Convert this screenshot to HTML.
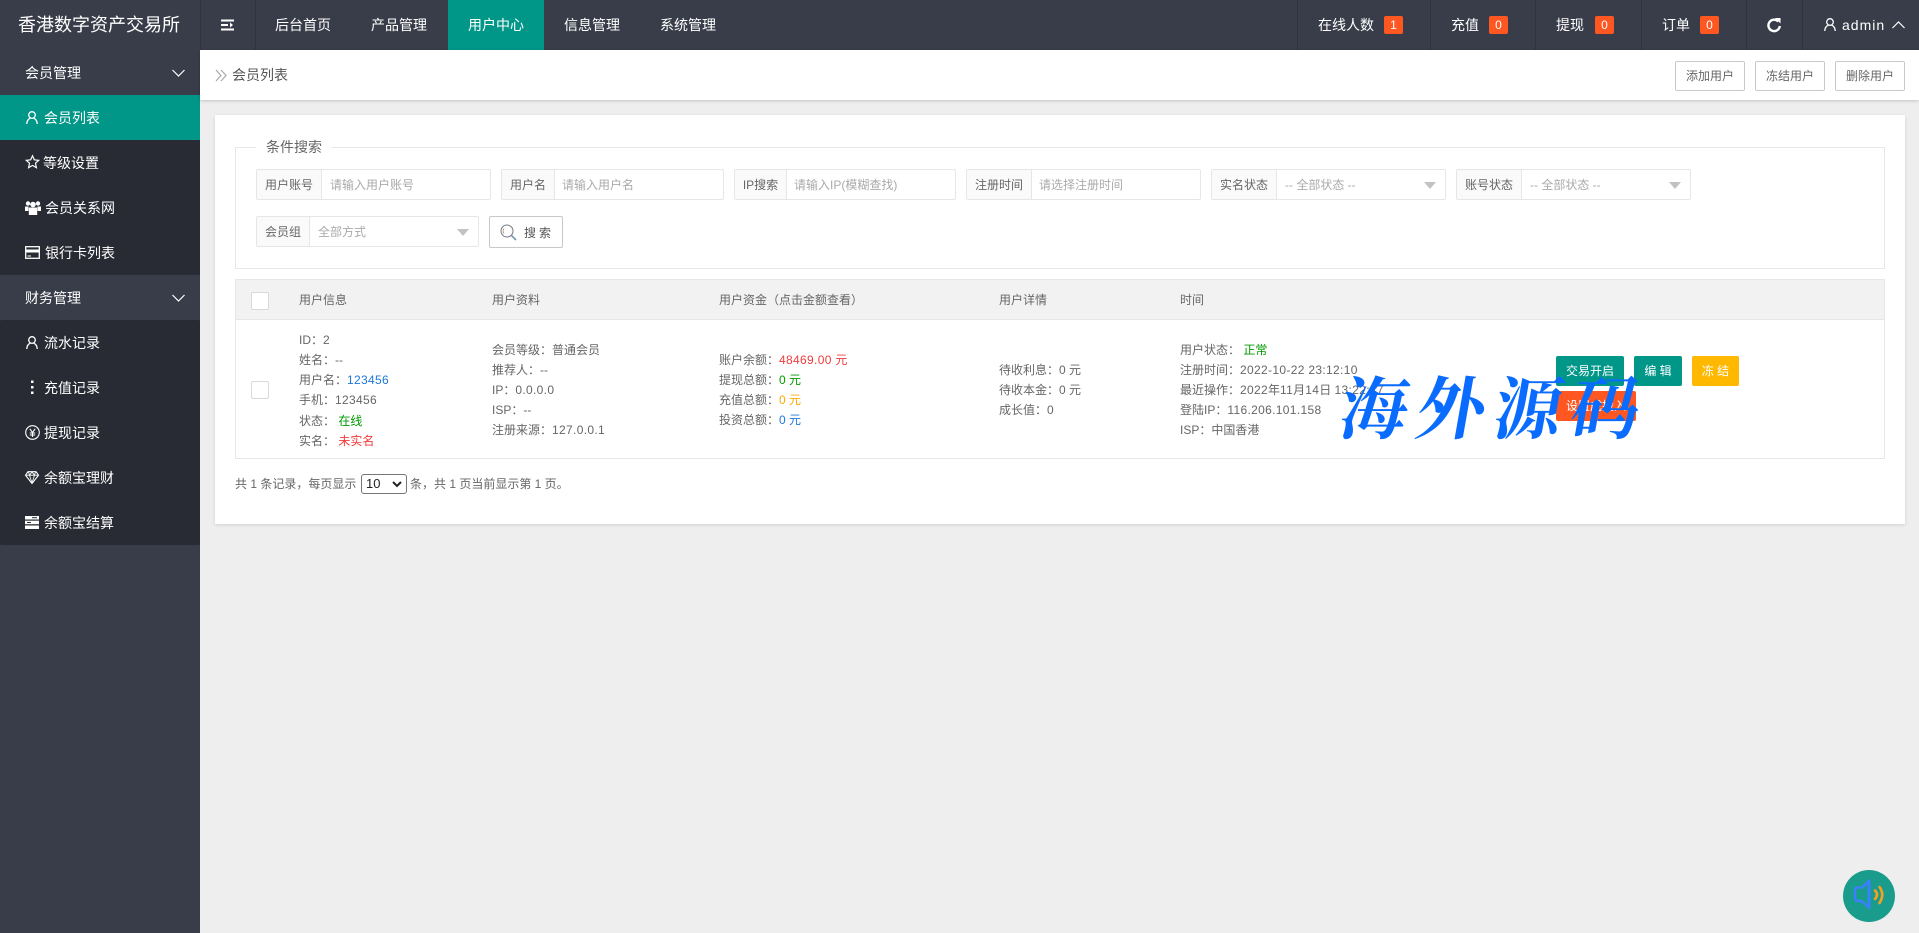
<!DOCTYPE html>
<html lang="zh"><head><meta charset="utf-8"><title>会员列表</title>
<style>
*{box-sizing:border-box;margin:0;padding:0}
html,body{width:1919px;height:933px;overflow:hidden;background:#eee}
body{position:relative;font-family:"Liberation Sans","Noto Sans CJK SC",sans-serif;font-size:12px;color:#666}
.a{position:absolute;white-space:nowrap}
.t{position:absolute;white-space:nowrap;line-height:20px;height:20px}
.rw{position:absolute;left:0;top:1px;width:0;height:0}
.n{letter-spacing:.33px}
svg{position:absolute;overflow:visible}
.top{position:absolute;left:0;top:0;width:1919px;height:50px;background:#393d49}
.nav{position:absolute;top:0;height:50px;line-height:50px;color:#fff;font-size:14px;text-align:center;width:96px}
.dv{position:absolute;top:0;width:1px;height:50px;background:#2f333d}
.bd{position:absolute;top:16px;width:19px;height:18px;background:#ff5722;color:#fff;font-size:12px;line-height:18px;text-align:center;border-radius:2px}
.side{position:absolute;left:0;top:50px;width:200px;height:883px;background:#393d49}
.sub{position:absolute;left:0;width:200px;background:#282b33;border-radius:2px}
.si{position:absolute;left:0;width:200px;height:45px;line-height:47px;color:#fff;font-size:14px}
.si span{position:absolute;white-space:nowrap}
.f{position:absolute;height:31px;background:#fff;border:1px solid #e6e6e6;border-radius:2px}
.f b{position:absolute;left:0;top:0;height:29px;line-height:30px;background:#fafafa;border-right:1px solid #e6e6e6;font-weight:400;color:#666;text-align:center;font-size:12px}
.f i{position:absolute;top:0;height:29px;line-height:30px;font-style:normal;color:#aaa;font-size:12px;white-space:nowrap}
.f u{position:absolute;top:12px;width:0;height:0;border:6px solid transparent;border-top:7px solid #c2c2c2;border-bottom:0}
.hb{position:absolute;top:61px;height:30px;width:70px;border:1px solid #c9c9c9;border-radius:2px;background:#fff;color:#666;text-align:center;line-height:28px;font-size:12px}
.cb{position:absolute;width:18px;height:18px;background:#fff;border:1px solid #d9d9d9;border-radius:2px}
.btn{position:absolute;height:30px;line-height:30px;color:#fff;text-align:center;border-radius:2px;font-size:12px}
.g{color:#090}.r{color:#f23b3b}.b{color:#1e78d8}.o{color:#ffa800}
</style></head><body>

<div class="top"></div>
<div class="a" style="left:18px;top:0;line-height:50px;font-size:18px;color:#fff">香港数字资产交易所</div>
<div class="dv" style="left:200px"></div><div class="dv" style="left:255px"></div>
<svg style="left:221px;top:19px" width="14" height="12" fill="none" stroke="#fff" stroke-width="2"><path d="M0 1.500H13M0 6H7M0 10.500H13"/><path d="M9 3.500L12 6L9 8.500Z" fill="#fff" stroke="none"/></svg>
<div class="nav" style="left:255px">后台首页</div>
<div class="nav" style="left:351px">产品管理</div>
<div class="nav" style="left:448px;background:#009688">用户中心</div>
<div class="nav" style="left:544px">信息管理</div>
<div class="nav" style="left:640px">系统管理</div>

<div class="dv" style="left:1297px"></div><div class="dv" style="left:1430px"></div><div class="dv" style="left:1535px"></div><div class="dv" style="left:1641px"></div><div class="dv" style="left:1746px"></div><div class="dv" style="left:1802px"></div>
<div class="nav" style="left:1318px;width:56px">在线人数</div><div class="bd" style="left:1384px">1</div>
<div class="nav" style="left:1451px;width:28px">充值</div><div class="bd" style="left:1489px">0</div>
<div class="nav" style="left:1556px;width:28px">提现</div><div class="bd" style="left:1595px">0</div>
<div class="nav" style="left:1662px;width:28px">订单</div><div class="bd" style="left:1700px">0</div>
<svg style="left:1767px;top:18px" width="14" height="14" fill="none" stroke="#fff" stroke-width="2.400"><path d="M11.300 3.500A5.700 5.700 0 1 0 12.800 8"/><path d="M8 0H13.500V5.500Z" fill="#fff" stroke="none"/></svg>
<svg style="left:1824px;top:18px" width="12" height="14" fill="none" stroke="#fff" stroke-width="1.300"><circle cx="6" cy="4" r="3.300"/><path d="M0.700 13C1 9.500 2.500 7.800 4.300 7.200M11.300 13C11 9.500 9.500 7.800 7.700 7.200"/></svg>
<div class="a" style="left:1842px;top:0;line-height:50px;font-size:14px;color:#fff;letter-spacing:1px">admin</div>
<svg style="left:1892px;top:21px" width="13" height="8" fill="none" stroke="#fff" stroke-width="1.200"><path d="M0.500 7L6.500 1L12.500 7"/></svg>

<div class="side"></div>
<div class="sub" style="top:95px;height:180px"></div>
<div class="sub" style="top:320px;height:225px"></div>
<div class="si" style="top:50px"><span style="left:25px">会员管理</span></div>
<svg style="left:172px;top:69px" width="13" height="8" fill="none" stroke="#fff" stroke-width="1.200"><path d="M0.500 1L6.500 7L12.500 1"/></svg>
<div class="si" style="top:95px;background:#009688"><span style="left:44px">会员列表</span></div>
<div class="si" style="top:140px"><span style="left:43px">等级设置</span></div>
<div class="si" style="top:185px"><span style="left:45px">会员关系网</span></div>
<div class="si" style="top:230px"><span style="left:45px">银行卡列表</span></div>
<div class="si" style="top:275px"><span style="left:25px">财务管理</span></div>
<svg style="left:172px;top:294px" width="13" height="8" fill="none" stroke="#fff" stroke-width="1.200"><path d="M0.500 1L6.500 7L12.500 1"/></svg>
<div class="si" style="top:320px"><span style="left:44px">流水记录</span></div>
<div class="si" style="top:365px"><span style="left:44px">充值记录</span></div>
<div class="si" style="top:410px"><span style="left:44px">提现记录</span></div>
<div class="si" style="top:455px"><span style="left:44px">余额宝理财</span></div>
<div class="si" style="top:500px"><span style="left:44px">余额宝结算</span></div>

<svg style="left:26px;top:111px" width="12" height="14" fill="none" stroke="#fff" stroke-width="1.300"><circle cx="6" cy="4" r="3.300"/><path d="M0.700 13C1 9.500 2.500 7.800 4.300 7.200M11.300 13C11 9.500 9.500 7.800 7.700 7.200"/></svg>
<svg style="left:26px;top:155px" width="14" height="14" fill="none" stroke="#fff" stroke-width="1.200"><path d="M6.500 0.800L8.300 4.800L12.700 5.300L9.500 8.200L10.400 12.700L6.500 10.400L2.600 12.700L3.500 8.200L0.300 5.300L4.700 4.800Z"/></svg>
<svg style="left:25px;top:201px" width="16" height="14" fill="#fff"><circle cx="3" cy="2.500" r="2.200"/><circle cx="13" cy="2.500" r="2.200"/><path d="M0 5.500H3.500V10H0ZM12.500 5.500H16V10H12.500Z"/><circle cx="8" cy="3.500" r="2.800"/><path d="M3.800 6.500H12.200V14H3.800Z"/></svg>
<svg style="left:25px;top:246px" width="15" height="13" fill="none" stroke="#fff" stroke-width="1.300"><rect x="0.700" y="0.700" width="13.600" height="11.600"/><path d="M0.700 5H14.300" stroke-width="3"/><path d="M2.500 10H6" stroke-width="1"/></svg>
<svg style="left:26px;top:336px" width="12" height="14" fill="none" stroke="#fff" stroke-width="1.300"><circle cx="6" cy="4" r="3.300"/><path d="M0.700 13C1 9.500 2.500 7.800 4.300 7.200M11.300 13C11 9.500 9.500 7.800 7.700 7.200"/></svg>
<svg style="left:31px;top:380px" width="3" height="15" fill="#fff"><rect width="2.500" height="2.500" x="0" y="0.500"/><rect width="2.500" height="2.500" x="0" y="6"/><rect width="2.500" height="2.500" x="0" y="11.500"/></svg>
<svg style="left:25px;top:425px" width="15" height="15" fill="none" stroke="#fff" stroke-width="1.100"><circle cx="7.500" cy="7.500" r="6.800"/><path d="M4.800 3.800L7.500 7.500L10.200 3.800M7.500 7.500V12M4.800 8H10.200M4.800 10H10.200"/></svg>
<svg style="left:25px;top:471px" width="14" height="13" fill="none" stroke="#fff" stroke-width="1.100"><path d="M3 0.700H11L13.500 4.200L7 12.500L0.500 4.200Z"/><path d="M0.500 4.200H13.500M4.500 4.200L7 12M9.500 4.200L7 12M3.500 0.700L4.500 4.200L7 1L9.500 4.200L10.500 0.700" stroke-width="0.900"/></svg>
<svg style="left:25px;top:516px" width="14" height="13" fill="#fff"><rect width="14" height="3.500"/><rect y="4.700" width="14" height="3.500"/><rect y="9.500" width="14" height="3.500"/><rect x="7" y="1.200" width="5" height="1" fill="#282b33"/><rect x="2" y="6" width="4" height="1" fill="#282b33"/></svg>

<div class="a" style="left:200px;top:50px;width:1719px;height:50px;background:#fff;box-shadow:0 1px 3px rgba(0,0,0,.18)"></div>
<svg style="left:215px;top:69px" width="13" height="13" fill="none" stroke="#aaa" stroke-width="1.200"><path d="M1 1L6 6.500L1 12M6 1L11 6.500L6 12"/></svg>
<div class="a" style="left:232px;top:50px;line-height:50px;font-size:14px;color:#555;height:50px">会员列表</div>
<div class="hb" style="left:1675px">添加用户</div>
<div class="hb" style="left:1755px">冻结用户</div>
<div class="hb" style="left:1835px">删除用户</div>

<div class="a" style="left:215px;top:115px;width:1690px;height:409px;background:#fff;box-shadow:0 1px 3px rgba(0,0,0,.12)"></div>
<div class="a" style="left:235px;top:147px;width:1650px;height:122px;border:1px solid #e6e6e6"></div>
<div class="a" style="left:256px;top:137px;height:20px;line-height:20px;padding:0 10px;background:#fff;font-size:14px;color:#666">条件搜索</div>

<div class="f" style="left:256px;top:169px;width:235px"><b style="width:65px">用户账号</b><i style="left:73px">请输入用户账号</i></div>
<div class="f" style="left:501px;top:169px;width:223px"><b style="width:53px">用户名</b><i style="left:60px">请输入用户名</i></div>
<div class="f" style="left:734px;top:169px;width:222px"><b style="width:52px">IP搜索</b><i style="left:59px">请输入IP(模糊查找)</i></div>
<div class="f" style="left:966px;top:169px;width:235px"><b style="width:65px">注册时间</b><i style="left:72px">请选择注册时间</i></div>
<div class="f" style="left:1211px;top:169px;width:235px"><b style="width:65px">实名状态</b><i style="left:73px">-- 全部状态 --</i><u style="right:9px"></u></div>
<div class="f" style="left:1456px;top:169px;width:235px"><b style="width:65px">账号状态</b><i style="left:73px">-- 全部状态 --</i><u style="right:9px"></u></div>
<div class="f" style="left:256px;top:216px;width:223px"><b style="width:53px">会员组</b><i style="left:61px">全部方式</i><u style="right:9px"></u></div>
<div class="a" style="left:489px;top:216px;width:74px;height:32px;border:1px solid #c9c9c9;border-radius:2px;background:#fff"></div>
<svg style="left:500px;top:224px" width="17" height="17" fill="none" stroke="#666" stroke-width="1"><circle cx="7" cy="7" r="6" stroke="#778"/><path d="M4 4.500A4 4 0 0 0 4 9.500" stroke="#b97"/><path d="M11.500 11.500L16 16" stroke-width="1.600" stroke="#79a"/></svg>
<div class="a" style="left:524px;top:223px;line-height:20px;font-size:12px;color:#555;letter-spacing:3px">搜索</div>

<div class="a" style="left:235px;top:279px;width:1650px;height:180px;border:1px solid #e6e6e6"></div>
<div class="a" style="left:236px;top:280px;width:1648px;height:40px;background:#f2f2f2;border-bottom:1px solid #e6e6e6"></div>
<div class="cb" style="left:251px;top:292px"></div>
<div class="t" style="left:299px;top:290px">用户信息</div>
<div class="t" style="left:492px;top:290px">用户资料</div>
<div class="t" style="left:719px;top:290px">用户资金（点击金额查看）</div>
<div class="t" style="left:999px;top:290px">用户详情</div>
<div class="t" style="left:1180px;top:290px">时间</div>

<div class="cb" style="left:251px;top:381px"></div>
<div class="rw">
<div class="t" style="left:299px;top:329px">ID：2</div>
<div class="t" style="left:299px;top:349px">姓名：--</div>
<div class="t" style="left:299px;top:369px">用户名：<span class="b n">123456</span></div>
<div class="t" style="left:299px;top:389px">手机：<span class="n">123456</span></div>
<div class="t" style="left:299px;top:410px">状态： <span class="g">在线</span></div>
<div class="t" style="left:299px;top:430px">实名： <span class="r">未实名</span></div>

<div class="t" style="left:492px;top:339px">会员等级：普通会员</div>
<div class="t" style="left:492px;top:359px">推荐人：--</div>
<div class="t" style="left:492px;top:379px">IP：<span class="n">0.0.0.0</span></div>
<div class="t" style="left:492px;top:399px">ISP：--</div>
<div class="t" style="left:492px;top:419px">注册来源：<span class="n">127.0.0.1</span></div>

<div class="t" style="left:719px;top:349px">账户余额：<span class="r n">48469.00 元</span></div>
<div class="t" style="left:719px;top:369px">提现总额：<span class="g">0 元</span></div>
<div class="t" style="left:719px;top:389px">充值总额：<span class="o">0 元</span></div>
<div class="t" style="left:719px;top:409px">投资总额：<span class="b">0 元</span></div>

<div class="t" style="left:999px;top:359px">待收利息：0 元</div>
<div class="t" style="left:999px;top:379px">待收本金：0 元</div>
<div class="t" style="left:999px;top:399px">成长值：0</div>

<div class="t" style="left:1180px;top:339px">用户状态： <span class="g">正常</span></div>
<div class="t" style="left:1180px;top:359px">注册时间：<span class="n">2022-10-22 23:12:10</span></div>
<div class="t" style="left:1180px;top:379px">最近操作：<span class="n">2022</span>年<span class="n">11</span>月<span class="n">14</span>日 <span class="n">13:22:47</span></div>
<div class="t" style="left:1180px;top:399px">登陆IP：<span class="n">116.206.101.158</span></div>
<div class="t" style="left:1180px;top:419px">ISP：中国香港</div>
</div>

<div class="btn" style="left:1556px;top:356px;width:68px;background:#009688">交易开启</div>
<div class="btn" style="left:1634px;top:356px;width:48px;background:#009688">编 辑</div>
<div class="btn" style="left:1692px;top:356px;width:47px;background:#ffb800">冻 结</div>
<div class="btn" style="left:1556px;top:391px;width:80px;background:#ff5722">设置成投入</div>

<div class="t" style="left:235px;top:474px">共 1 条记录，每页显示</div>
<div class="a" style="left:361px;top:474px;width:46px;height:20px;border:1px solid #767676;border-radius:3px;background:#fff;color:#222;font-size:13px;line-height:18px;padding-left:4px">10</div>
<svg style="left:392px;top:481px" width="10" height="7" fill="none" stroke="#222" stroke-width="2"><path d="M1 1L5 5L9 1"/></svg>
<div class="t" style="left:410px;top:474px">条，共 1 页当前显示第 1 页。</div>

<div class="a" style="left:1334px;top:363px;font-family:'Noto Serif CJK SC','Noto Sans CJK SC',serif;font-weight:700;font-size:68px;line-height:84px;letter-spacing:9px;color:#0a6cff;transform:skewX(-10deg);transform-origin:left bottom">海外源码</div>

<div class="a" style="left:1843px;top:870px;width:52px;height:52px;border-radius:50%;background:#1a9c8c"></div>
<svg style="left:1853px;top:880px" width="34" height="32" fill="none" stroke-linecap="round" stroke-linejoin="round"><path d="M16 1L9 7.500H4.500Q2 7.500 2 11V18Q2 21 4.500 21H8.500L16 27.500" stroke="#3a80ff" stroke-width="2.400"/><path d="M16 1V27" stroke="#3a80ff" stroke-width="3"/><path d="M22 10.500Q26 14.500 22 19" stroke="#f5a020" stroke-width="2.600"/><path d="M26.500 7Q32 14.500 26.500 23" stroke="#f5a020" stroke-width="2.600"/></svg>
</body></html>
